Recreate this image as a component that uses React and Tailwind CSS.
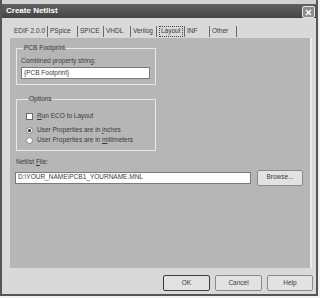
import React from 'react';

const TABS = [
  { label: 'EDIF 2.0.0', w: 'w-[36px]' },
  { label: 'PSpice', w: 'w-[30px]' },
  { label: 'SPICE', w: 'w-[26px]' },
  { label: 'VHDL', w: 'w-[27px]' },
  { label: 'Verilog', w: 'w-[26px]' },
  { label: 'Layout', w: 'w-[28px]', active: true },
  { label: 'INF', w: 'w-[25px]' },
  { label: 'Other', w: 'w-[27px]' },
];

function Button({ children, w = 'w-[47px]', strong }) {
  return (
    <div
      className={`${w} h-[16px] flex items-center justify-center bg-[#e2e2e2] border ${
        strong ? 'border-[#3c3c3c]' : 'border-[#8a8a8a]'
      } rounded-[2px] text-[6.5px] text-[#3a3a3a]`}
    >
      {children}
    </div>
  );
}

export default function App() {
  return (
    <div className="w-[320px] h-[298px] bg-[#f2f2f2] font-['Liberation_Sans',Arial,sans-serif] text-[#3a3a3a] whitespace-nowrap">
      <div className="w-[318px] h-[296px] flex flex-col bg-[#d9d9d9] border-x-2 border-b-2 border-[#555]">
        <div className="h-[4px] bg-[#d2d2d2]" />
        {/* Title bar */}
        <div className="h-[14px] flex items-end justify-between pl-[4px] pr-[1px] bg-gradient-to-b from-[#626262] to-[#454545]">
          <span className="self-center text-[8px] font-bold text-white leading-none">Create Netlist</span>
          <div className="w-[13px] h-[12px] flex items-center justify-center bg-[#8c8c8c] border border-[#e6e6e6] rounded-[2px]">
            <svg width="7" height="7" viewBox="0 0 7 7">
              <path d="M1 1L6 6M6 1L1 6" stroke="#fff" strokeWidth="1.5" />
            </svg>
          </div>
        </div>

        {/* Tabs */}
        <div className="mt-[7px] ml-[10px] h-[13px] flex items-center text-[6.5px] leading-none">
          {TABS.map((t) => (
            <div key={t.label} className={`${t.w} h-[11px] flex items-center border-r border-[#6a6a6a] pl-[2px]`}>
              <span className={t.active ? 'px-[1px] py-[1px] border border-dotted border-[#444]' : ''}>{t.label}</span>
            </div>
          ))}
        </div>

        {/* Panel */}
        <div className="ml-[8px] w-[302px] h-[230px] bg-[#b6b6b6] border-r-2 border-[#ececec] flex flex-col pl-[6px] text-[6.5px] leading-none">
          <fieldset className="mt-[7px] w-[140px] h-[40px] border border-[#e8e8e8] px-[4px]">
            <legend className="px-[1px] ml-[2px]">PCB Footprint</legend>
            <div className="mt-[6px]">Combined property string:</div>
            <div className="mt-[3px] w-[129px] h-[12px] bg-white border border-[#7a7a7a] flex items-center pl-[2px]">
              {'{PCB Footprint}'}
            </div>
          </fieldset>

          <fieldset className="mt-[11px] w-[140px] h-[55px] border border-[#e8e8e8] px-[9px]">
            <legend className="px-[1px] ml-[2px]">Options</legend>
            <div className="mt-[10px] flex items-center gap-[4px]">
              <div className="w-[7px] h-[7px] bg-white border border-[#6a6a6a]" />
              <span><u>R</u>un ECO to Layout</span>
            </div>
            <div className="mt-[7px] flex items-center gap-[4px]">
              <div className="w-[7px] h-[7px] rounded-full bg-white border border-[#8a8a8a] flex items-center justify-center">
                <div className="w-[3px] h-[3px] rounded-full bg-[#222]" />
              </div>
              <span>User Properties are in <u>i</u>nches</span>
            </div>
            <div className="mt-[3px] flex items-center gap-[4px]">
              <div className="w-[7px] h-[7px] rounded-full bg-white border border-[#8a8a8a]" />
              <span>User Properties are in <u>m</u>illimeters</span>
            </div>
          </fieldset>

          <div className="mt-[8px]">Netlist <u>F</u>ile:</div>
          <div className="mt-[4px] flex items-center">
            <div className="-ml-[1px] w-[236px] h-[12px] bg-white border border-[#7a7a7a] flex items-center pl-[2px]">
              D:\YOUR_NAME\PCB1_YOURNAME.MNL
            </div>
            <div className="ml-[6px]">
              <Button w="w-[46px]">Browse...</Button>
            </div>
          </div>
        </div>

        {/* Buttons */}
        <div className="mt-[7px] ml-[161px] flex gap-[5px]">
          <Button strong>OK</Button>
          <Button>Cancel</Button>
          <Button w="w-[46px]">Help</Button>
        </div>
      </div>
    </div>
  );
}
